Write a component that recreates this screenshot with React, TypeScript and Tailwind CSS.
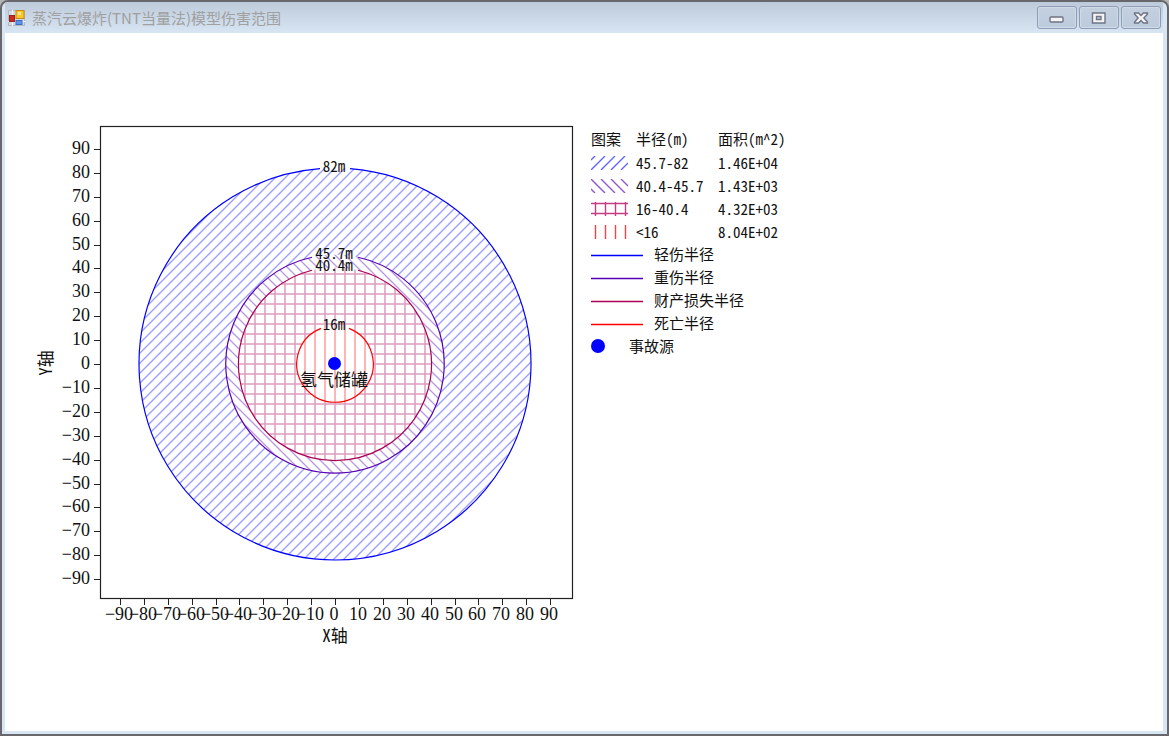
import type { ReactNode } from 'react'

type Zone = {
  id: string
  name: string
  radius: number
  gap: number
  line: string
  hatch: string
  range: string
  area: string
}

// From the outside in, so that every zone is painted over the one around it
const zones: Zone[] = [
  { id: 'minor', name: '轻伤半径', radius: 82, gap: 15, line: '#0000ff', hatch: '#9c9cff', range: '45.7-82', area: '1.46E+04' },
  { id: 'serious', name: '重伤半径', radius: 45.7, gap: 23, line: '#5500b4', hatch: '#b896e0', range: '40.4-45.7', area: '1.43E+03' },
  { id: 'property', name: '财产损失半径', radius: 40.4, gap: 23, line: '#aa0055', hatch: '#dd9cc0', range: '16-40.4', area: '4.32E+03' },
  { id: 'death', name: '死亡半径', radius: 16, gap: 14, line: '#ff0000', hatch: '#ff9c9c', range: '<16', area: '8.04E+02' },
]

const ticks = Array.from({ length: 19 }, (_, i) => (i - 9) * 10)

// Plot geometry in chart pixels
const CX = 305
const CY = 242
const SCALE = 2.39
const BOX = { left: 70, top: 5, right: 542, bottom: 477 }

const numberFont = "'Liberation Serif', 'Noto Sans CJK SC', serif"
const cjkFont = "'Noto Sans CJK SC', sans-serif"

function tickLabel(value: number) {
  return value < 0 ? `−${-value}` : String(value)
}

// Circle left open at the top, where its label stands
function openCircle(r: number, gap: number) {
  const dy = Math.sqrt(r * r - gap * gap)
  return `M${CX + gap} ${CY - dy}A${r} ${r} 0 1 1 ${CX - gap} ${CY - dy}`
}

function HatchPatterns() {
  return (
    <defs>
      <pattern id="hatch-minor" width="10" height="10" patternUnits="userSpaceOnUse">
        <rect width="10" height="10" fill="#fff" />
        <path d="M-1 2L2 -1M-1 12L12 -1M8 13L13 8" stroke={zones[0].hatch} strokeWidth="1.4" />
      </pattern>
      <pattern id="hatch-serious" width="10" height="10" patternUnits="userSpaceOnUse">
        <rect width="10" height="10" fill="#fff" />
        <path d="M1 -1L12 10M-1 7L4 12" stroke={zones[1].hatch} strokeWidth="1.3" />
      </pattern>
      <pattern id="hatch-property" width="10" height="10" patternUnits="userSpaceOnUse">
        <rect width="10" height="10" fill="#fff" />
        <path d="M5 0V10M0 2H10" stroke={zones[2].hatch} strokeWidth="1.5" />
      </pattern>
      <pattern id="hatch-death" width="10" height="10" patternUnits="userSpaceOnUse">
        <rect width="10" height="10" fill="#fff" />
        <path d="M5 0V10" stroke={zones[3].hatch} strokeWidth="1.5" />
      </pattern>
    </defs>
  )
}

function DamageChart() {
  return (
    <svg width="545" height="530" viewBox="0 0 545 530" className="shrink-0" role="img" aria-label="伤害范围">
      <HatchPatterns />

      {zones.map((z) => (
        <circle key={z.id} cx={CX} cy={CY} r={z.radius * SCALE} fill={`url(#hatch-${z.id})`} />
      ))}
      {zones.map((z) => (
        <path
          key={z.id}
          d={openCircle(z.radius * SCALE, z.gap)}
          fill="none"
          stroke={z.line}
          strokeWidth="1.2"
        />
      ))}

      <rect
        x={BOX.left + 0.5}
        y={BOX.top - 0.5}
        width={BOX.right - BOX.left}
        height={BOX.bottom - BOX.top}
        fill="none"
        stroke="#222"
        strokeWidth="1.2"
      />

      {/* Axes */}
      <g fontFamily={numberFont} fontSize="18" fill="#111">
        {ticks.map((t) => {
          const y = Math.round(CY - t * SCALE)
          return (
            <g key={t}>
              <path d={`M${BOX.left - 6} ${y + 0.5}H${BOX.left}`} stroke="#222" />
              <text x={BOX.left - 10} y={y + 5} textAnchor="end">{tickLabel(t)}</text>
            </g>
          )
        })}
        {ticks.map((t) => {
          const x = Math.round(CX + t * SCALE)
          return (
            <g key={t}>
              <path d={`M${x + 0.5} ${BOX.bottom}V${BOX.bottom + 6}`} stroke="#222" />
              <text x={x - 1} y={BOX.bottom + 21} textAnchor="middle">{tickLabel(t)}</text>
            </g>
          )
        })}
      </g>
      <g className="[font-feature-settings:'hwid']" fontFamily={cjkFont} fontSize="17" fill="#111" textAnchor="middle">
        <text x={CX} y="520">X轴</text>
        <text transform={`translate(22 ${CY - 1}) rotate(-90)`}>Y轴</text>
      </g>

      {/* Accident source */}
      <circle cx={CX - 0.5} cy={CY - 0.5} r="6.5" fill="#0000ff" />
      <text x={CX - 1} y="264" fontFamily={cjkFont} fontSize="17" fill="#111" textAnchor="middle">
        氢气储罐
      </text>

      <g className="[font-feature-settings:'hwid']" fontFamily={cjkFont} fontSize="15" fill="#111" textAnchor="middle">
        {zones.map((z) => (
          <text key={z.id} x={CX - 1} y={Math.round(CY - z.radius * SCALE) + 4}>
            {z.radius}m
          </text>
        ))}
      </g>
    </svg>
  )
}

const swatchPaths: Record<string, { d: string; color: string }> = {
  minor: { d: 'M0 4L4 0M0 14L14 0M10 14L24 0M20 14L34 0M30 14L37 7', color: '#6464ff' },
  serious: { d: 'M0 10L4 14M0 0L14 14M10 0L24 14M20 0L34 14M30 0L37 7', color: '#9055cc' },
  property: { d: 'M0 1.5H37M0 11.5H37M4.5 0V14M14.5 0V14M24.5 0V14M34.5 0V14', color: '#c43c84' },
  death: { d: 'M4.5 0V14M14.5 0V14M24.5 0V14M34.5 0V14', color: '#ff4040' },
}

function Swatch({ id }: { id: string }) {
  return (
    <svg width="37" height="14" viewBox="0 0 37 14" className="block">
      <path d={swatchPaths[id].d} stroke={swatchPaths[id].color} strokeWidth="1.4" fill="none" />
    </svg>
  )
}

function Legend() {
  return (
    <div className="mt-[5px] ml-4 shrink-0 text-[15px] leading-[22px] text-[#111] [font-feature-settings:'hwid']">
      <table className="table-fixed border-collapse text-left">
        <thead>
          <tr className="h-6">
            <th className="w-[45px] p-0 font-normal">图案</th>
            <th className="w-[82px] p-0 font-normal">半径(m)</th>
            <th className="w-[82px] p-0 font-normal">面积(m^2)</th>
          </tr>
        </thead>
        <tbody>
          {zones.map((z) => (
            <tr key={z.id} className="h-[23px]">
              <td className="p-0">
                <Swatch id={z.id} />
              </td>
              <td className="p-0">{z.range}</td>
              <td className="p-0">{z.area}</td>
            </tr>
          ))}
        </tbody>
      </table>
      <ul className="-mt-px">
        {zones.map((z) => (
          <li key={z.id} className="flex h-[23px] items-center gap-[11px]">
            <svg width="52" height="6" viewBox="0 0 52 6">
              <path d="M0 4.5H52" stroke={z.line} strokeWidth="1.4" />
            </svg>
            {z.name}
          </li>
        ))}
        <li className="flex h-[23px] items-center gap-6">
          <svg width="14" height="14" viewBox="0 0 14 14">
            <circle cx="7" cy="7" r="7" fill="#0000ff" />
          </svg>
          事故源
        </li>
      </ul>
    </div>
  )
}

function AppIcon() {
  return (
    <svg width="18" height="18" viewBox="0 0 18 18">
      <rect x="0.5" y="1.5" width="16" height="15" fill="#d3d9e0" stroke="#b4bac4" />
      <path d="M4.5 1V17M0 12.5H17" stroke="#f3f5f7" />
      <rect x="1.5" y="6.5" width="5" height="6" fill="#cf2a1e" stroke="#94241c" />
      <rect x="8" y="1.5" width="8" height="8" fill="#fbc72d" stroke="#c28b16" />
      <rect x="10" y="3" width="3" height="3" fill="#ffe489" />
      <rect x="8" y="11.5" width="6" height="4" fill="#5c96ee" stroke="#386cc8" />
    </svg>
  )
}

function CaptionButton({ label, children }: { label: string; children: ReactNode }) {
  return (
    <button
      type="button"
      aria-label={label}
      className="flex h-[23px] w-10 items-center justify-center rounded-[3px] border border-[#8f9cb6] bg-linear-to-b from-[#c4d0df] to-[#bccbdd] shadow-[inset_0_0_0_1px_#d0dbe8]"
    >
      <svg width="16" height="14" viewBox="0 0 16 14">
        {children}
      </svg>
    </button>
  )
}

function TitleBar() {
  return (
    <header className="flex h-[31px] items-center justify-between bg-linear-to-b from-[#bdcada] to-[#d8e5f3] pr-[2px] pl-[3px]">
      <div className="flex items-center gap-[6px]">
        <AppIcon />
        <h1 className="text-[15px] leading-5 text-[#a0a0a0]">蒸汽云爆炸(TNT当量法)模型伤害范围</h1>
      </div>
      <div className="flex gap-[2px]">
        <CaptionButton label="最小化">
          <rect x="1" y="6" width="13" height="5" rx="1" fill="#f4f4f4" stroke="#6e7485" strokeWidth="1.4" />
        </CaptionButton>
        <CaptionButton label="最大化">
          <path
            d="M1.5 2H14V12H1.5ZM5.5 5.5V8.5H10V5.5Z"
            fill="#f4f4f4"
            fillRule="evenodd"
            stroke="#6e7485"
            strokeWidth="1.4"
          />
        </CaptionButton>
        <CaptionButton label="关闭">
          <path
            d="M1.5 2H5.5L8 4.5L10.5 2H14.5V3L10.8 7L14.5 11V12H10.5L8 9.5L5.5 12H1.5V11L5.2 7L1.5 3Z"
            fill="#f4f4f4"
            stroke="#6e7485"
            strokeWidth="1.4"
          />
        </CaptionButton>
      </div>
    </header>
  )
}

export default function App() {
  return (
    <div className="bg-[#b4b4b4] font-['Noto_Sans_CJK_SC',sans-serif]">
      <div className="flex min-h-screen flex-col overflow-hidden rounded-t-lg border-2 border-[#68686c] bg-[#d8e5f3] pr-1 pb-[3px] pl-[3px]">
        <TitleBar />
        <main className="flex flex-1 items-start bg-white pt-[89px] pl-[25px]">
          <DamageChart />
          <Legend />
        </main>
      </div>
    </div>
  )
}
